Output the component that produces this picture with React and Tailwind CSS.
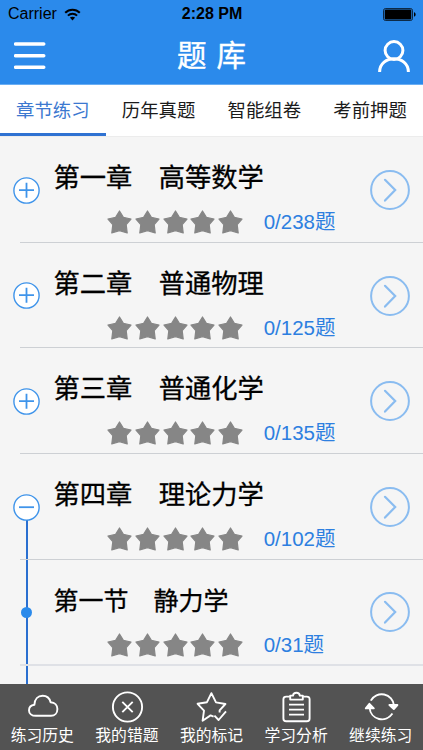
import clsx from 'clsx';

const tabs = ['章节练习', '历年真题', '智能组卷', '考前押题'];

const chapters = [
  { title: '第一章　高等数学', count: '0/238题', state: 'closed' },
  { title: '第二章　普通物理', count: '0/125题', state: 'closed' },
  { title: '第三章　普通化学', count: '0/135题', state: 'closed' },
  { title: '第四章　理论力学', count: '0/102题', state: 'open' },
  { title: '第一节　静力学', count: '0/31题', state: 'child' },
];

const Star = () => (
  <svg className="h-6 w-[25px]" viewBox="0 0 25 24">
    <path
      d="M12.5 1 L16.4 7.4 L24 9 L19.2 14.6 L20.2 23 L12.5 20.6 L4.8 23 L5.8 14.6 L1 9 L8.6 7.4 Z"
      fill="#868686"
      stroke="#868686"
      strokeWidth="1.2"
      strokeLinejoin="round"
    />
  </svg>
);

const StatusBar = () => (
  <div className="grid h-[28px] grid-cols-3 items-center pl-2 pr-[7px] text-black">
    <div className="flex items-center gap-[7px]">
      <span className="text-[16px] leading-[28px]">Carrier</span>
      <svg className="h-[13px] w-[17px]" viewBox="0 0 17 13">
        <path d="M1.2 4.8 C5.2 0.6 11.8 0.6 15.8 4.8" fill="none" stroke="black" strokeWidth="2" />
        <path d="M3.9 7.6 C6.5 5 10.5 5 13.1 7.6" fill="none" stroke="black" strokeWidth="2" />
        <path d="M5.9 9.6 C7.4 8.3 9.6 8.3 11.1 9.6 L8.5 12.4 Z" fill="black" />
      </svg>
    </div>
    <span className="text-center text-[16px] font-bold leading-[28px]">2:28 PM</span>
    <svg className="h-[13px] w-[33px] justify-self-end" viewBox="0 0 33 13">
      <rect x="0.5" y="0.5" width="29" height="12" rx="2" fill="none" stroke="black" strokeWidth="0.7" />
      <rect x="1.7" y="1.6" width="26.6" height="9.8" rx="1" fill="black" />
      <path d="M31 4.3 C33.2 5 33.2 8 31 8.7 Z" fill="black" />
    </svg>
  </div>
);

const Header = () => (
  <header className="h-[85px] shrink-0 border-b border-[#6aaef3] bg-[#2b8aeb]">
    <StatusBar />
    <div className="flex h-[56px] items-center justify-between pl-[14px] pr-[13px] text-white">
      <svg className="h-[28px] w-[32px]" viewBox="0 0 32 28">
        <path d="M1.5 2H29.8M1.5 13.7H29.8M1.5 25.3H29.8" stroke="white" strokeWidth="3.4" strokeLinecap="round" />
      </svg>
      <h1 className="whitespace-pre pr-px text-[29.5px] leading-[56px] [word-spacing:2px] [-webkit-text-stroke:0.4px_white]">题 库</h1>
      <svg className="h-[33px] w-[32px]" viewBox="0 0 32 33" fill="none" stroke="white" strokeWidth="3">
        <circle cx="16" cy="10.5" r="8.9" />
        <path d="M1.6 32 C1.6 14.4 30.4 14.4 30.4 32" />
      </svg>
    </div>
  </header>
);

const Toggle = ({ state }) => {
  if (state === 'child') {
    return <div className="z-10 size-[11px] rounded-full bg-[#2b8aeb]" />;
  }
  return (
    <svg className="z-10 size-[27px]" viewBox="0 0 27 27" fill="none" stroke="#3f94ea">
      <circle cx="13.5" cy="13.5" r="12.6" fill="white" strokeWidth="1.4" />
      <path d={state === 'open' ? 'M6 13.2H21' : 'M6 13.2H21M13.5 5.7V20.7'} strokeWidth="1.8" />
    </svg>
  );
};

const ChapterRow = ({ title, count, state }) => (
  <li className="relative flex h-[105.6px] shrink-0">
    {/* tree line joining an open chapter to its sections */}
    {state !== 'closed' && (
      <div className={clsx('absolute bottom-0 left-[25.5px] w-[2px] bg-[#2a6fd0]', state === 'open' ? 'top-[66px]' : 'top-0')} />
    )}
    <div className="flex w-[53.5px] justify-center pr-[0.5px]">
      <div className="flex h-[106px] items-center">
        <Toggle state={state} />
      </div>
    </div>
    <div className={clsx('absolute left-5 right-0', state === 'child' ? '-bottom-px h-[2px] bg-[#dfe1e6]' : 'bottom-0 h-px bg-[#cdd0d4]')} />
    <div className="flex-1 pt-[22px]">
      <h2
        className={clsx(
          'whitespace-nowrap leading-[38px] text-black [-webkit-text-stroke:0.3px_black]',
          state === 'child' ? 'text-[25px]' : 'text-[26.3px]'
        )}
      >
        {title}
      </h2>
      <div className="flex items-center pl-[53.5px] pt-[12px]">
        <div className="flex gap-[2.8px]">
          {[1, 2, 3, 4, 5].map((n) => (
            <Star key={n} />
          ))}
        </div>
        <span className="pl-[20.5px] text-[20.5px] leading-[26px] text-[#2d7fe0]">{count}</span>
      </div>
    </div>
    <div className="flex w-[53px] items-center">
      <svg className="size-10" viewBox="0 0 40 40" fill="none" stroke="#8abcf0">
        <circle cx="20" cy="20" r="18.9" strokeWidth="2" />
        <path d="M15 9.8 L25.2 20 L15 30.6" strokeWidth="2.2" strokeLinecap="round" />
      </svg>
    </div>
  </li>
);

const CloudIcon = () => (
  <path d="M10 24.8 C5.5 24.8 3 22.2 3 19.4 C3 16.2 5.2 14.2 8.4 13.8 C8.6 8 12 4.8 16.6 4.8 C20.8 4.8 23.6 7.2 24.6 11.2 C29 11.4 31.4 14.4 31.4 18 C31.4 22 28.8 24.8 25 24.8 Z" />
);

const WrongIcon = () => (
  <>
    <circle cx="16.5" cy="16" r="14.6" />
    <path d="M11.3 10.8 L21.7 21.2 M21.7 10.8 L11.3 21.2" />
  </>
);

const MarkIcon = () => (
  <>
    <path d="M18.6 25.6 L15.6 24.4 L7.6 29.8 L9 19.6 L2.6 12.8 L12 11.2 L16.4 2.2 L21 11.4 L30.4 13 L24.6 19.4 L24.6 21.6" />
    <path d="M19.4 24.6 L23.6 29 L31 20.4" />
  </>
);

const ReportIcon = () => (
  <>
    <path d="M9.8 5.6H6.2C4.4 5.6 3.4 6.6 3.4 8.2V27.4C3.4 29.2 4.4 30.2 6.2 30.2H26.8C28.6 30.2 29.6 29.2 29.6 27.4V8.2C29.6 6.6 28.6 5.6 26.8 5.6H23.2" />
    <path d="M10.2 8.6V4.6H13C13.4 0.8 19.4 0.8 19.8 4.6H22.8V8.6Z" />
    <path d="M9 13.6H24M9 18.6H24M9 23.6H24" />
  </>
);

// two arcs chasing each other around a 25px circle
const ResumeIcon = () => (
  <>
    <path d="M5.8 9.6 A12.4 12.4 0 0 1 29 14.5" />
    <path d="M4.6 17 A12.4 12.4 0 0 0 27.4 22.6" />
    <path d="M0.8 17.4 L4.4 12.8 L8.8 17.4Z M24.4 14 H32.4 L28.8 18Z" fill="white" />
  </>
);

const navItems = [
  { label: '练习历史', Icon: CloudIcon },
  { label: '我的错题', Icon: WrongIcon },
  { label: '我的标记', Icon: MarkIcon },
  { label: '学习分析', Icon: ReportIcon },
  { label: '继续练习', Icon: ResumeIcon },
];

const App = () => {
  return (
    <div className="flex h-[750px] w-[423px] flex-col overflow-hidden bg-[#f5f5f5] font-['Liberation_Sans','Noto_Sans_CJK_SC',sans-serif]">
      <Header />

      <nav className="grid h-[52px] shrink-0 grid-cols-4 border-b border-[#ececec] bg-white">
        {tabs.map((tab, i) => (
          <button
            key={tab}
            className={clsx(
              'h-[51px] whitespace-nowrap border-b-[3px] pt-[3px] text-[18.4px] leading-[45px]',
              i === 0 ? 'border-[#2f72d2] text-[#3c78d0]' : 'border-transparent text-[#1b1b1b]'
            )}
          >
            {tab}
          </button>
        ))}
      </nav>

      <main className="min-h-0 flex-1 overflow-hidden pt-[0.3px]">
        <ul className="flex flex-col">
          {chapters.map((chapter) => (
            <ChapterRow key={chapter.title} {...chapter} />
          ))}
          <li className="h-[20px] pl-[25.5px]">
            <div className="h-full w-[2px] bg-[#2a6fd0]" />
          </li>
        </ul>
      </main>

      <footer className="grid h-[66px] shrink-0 grid-cols-5 bg-[#535353] text-white">
        {navItems.map(({ label, Icon }) => (
          <button key={label} className="flex flex-col items-center pt-[7px]">
            <svg className="h-8 w-8 overflow-visible" viewBox="0 0 32 32" fill="none" stroke="white" strokeWidth="1.9" strokeLinejoin="round">
              <Icon />
            </svg>
            <span className="whitespace-nowrap pt-[1px] text-[15.8px] leading-[24px]">{label}</span>
          </button>
        ))}
      </footer>
    </div>
  );
};

export default App;
